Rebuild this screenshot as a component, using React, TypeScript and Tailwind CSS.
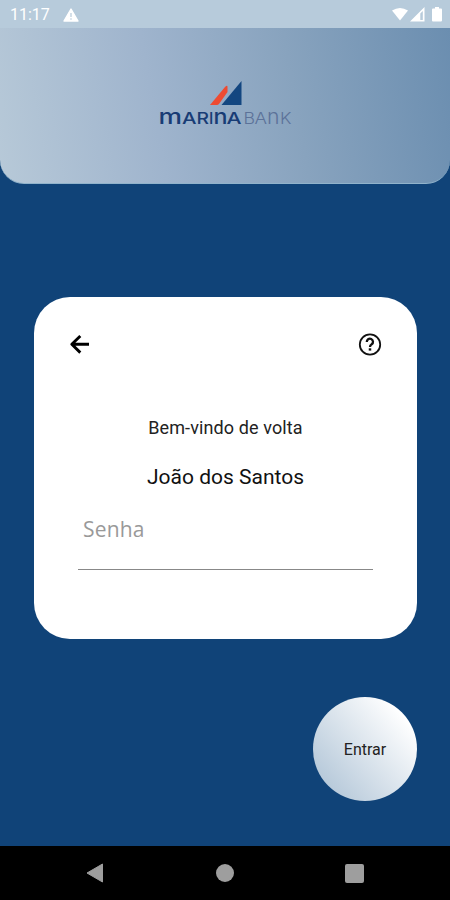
import { useState } from 'react'

const StatusBar = () => (
  <header className="flex h-7 items-center justify-between bg-[#b7cbdb] pl-2.5 pr-1.5 text-white">
    <div className="flex items-center gap-[13px] pt-0.5">
      <span className="w-10 text-[16px] leading-5">11:17</span>
      <svg viewBox="0 0 16 14" className="h-3.5 w-4" fill="none">
        <path d="M8 1 15 13H1Z" fill="white" stroke="white" strokeWidth="1.4" strokeLinejoin="round" />
        <path d="M8 5v4M8 10.2v1.6" stroke="#b7cbdb" strokeWidth="1.2" />
      </svg>
    </div>
    <svg viewBox="0 0 52 16" className="mt-0.5 h-4 w-[52px]" fill="white">
      <path d="M0 3.5Q8 -1.5 16 3.5L8 13.5Z" />
      <path fillRule="evenodd" d="M32.5 0V14.5H18ZM30.8 4 28.3 6.5V13H30.8Z" />
      <path d="M43 0h4v1.5h2a1 1 0 0 1 1 1V13.5a1 1 0 0 1-1 1h-8a1 1 0 0 1-1-1V2.5a1 1 0 0 1 1-1h2Z" />
    </svg>
  </header>
)

const Logo = () => (
  <svg viewBox="0 0 140 54" className="h-[54px] w-[140px]">
    <path d="M55 25 70 7Q72.5 4.5 72.5 7V12L64 24Q63 25 62 25Z" fill="#ee4b32" />
    <path d="M66.5 25 86.5 1V25Z" fill="#134680" />
    <g fontFamily="Inter, sans-serif" fontSize="16">
      <g fill="#183c75" fontWeight="500">
        <text x="3.5" y="44.3" fontSize="21" textLength="23.5" lengthAdjust="spacingAndGlyphs" className="lowercase">M</text>
        <text x="27" y="44.3" textLength="14.5" lengthAdjust="spacingAndGlyphs">A</text>
        <text x="41.5" y="44.3" textLength="12.5" lengthAdjust="spacingAndGlyphs">R</text>
        <text x="54" y="44.3">I</text>
        <text x="58.5" y="44.3" fontSize="21" textLength="14" lengthAdjust="spacingAndGlyphs" className="lowercase">N</text>
        <text x="71.5" y="44.3" textLength="15" lengthAdjust="spacingAndGlyphs">A</text>
      </g>
      <g fill="#5c7299" fontWeight="300">
        <text x="88.5" y="44.3" textLength="11.5" lengthAdjust="spacingAndGlyphs">B</text>
        <text x="99.5" y="44.3" textLength="12.5" lengthAdjust="spacingAndGlyphs">A</text>
        <text x="112" y="44.3" fontSize="21" textLength="12.5" lengthAdjust="spacingAndGlyphs" className="lowercase">N</text>
        <text x="125" y="44.3" textLength="11.5" lengthAdjust="spacingAndGlyphs">K</text>
      </g>
    </g>
  </svg>
)

const NavBar = () => (
  <nav className="flex h-[54px] items-center justify-between bg-black pl-[86px] pr-[86px]">
    <svg viewBox="0 0 18 20" className="h-5 w-[18px]">
      <path d="M1 10 16.5 1V19Z" fill="#9e9e9e" stroke="#9e9e9e" strokeLinejoin="round" />
    </svg>
    <div className="ml-px size-[18px] rounded-full bg-[#9e9e9e]" />
    <div className="size-[19px] rounded-[2px] bg-[#9e9e9e]" />
  </nav>
)

export default function App() {
  const [password, setPassword] = useState('')

  return (
    <div className="flex h-[900px] w-[450px] flex-col overflow-hidden bg-[#104378] font-[Roboto,sans-serif]">
      <StatusBar />
      <div className="flex h-[156px] justify-center rounded-b-[24px] border-b border-[#91b3cb] bg-[linear-gradient(80deg,#b7c9d8_0%,#9fb4cd_35%,#88a3be_65%,#6b8eb0_100%)] pt-[52px]">
        <Logo />
      </div>

      <main className="flex flex-1 flex-col pl-[34px] pr-[33px] pt-[113px]">
        <section className="h-[342px] rounded-[36px] bg-white px-[35px] pt-[35px]">
          <div className="flex h-6 items-center justify-between">
            <button type="button" aria-label="Voltar">
              <svg viewBox="0 0 20 20" className="size-5" fill="none" stroke="black" strokeWidth="2.9">
                <path d="M11.3 2 2.8 10.3 11.3 18.6M2.8 10.3H20" strokeLinejoin="round" />
              </svg>
            </button>
            <button type="button" aria-label="Ajuda">
              <svg viewBox="0 0 24 24" className="size-6" fill="none" stroke="#111111">
                <circle cx="12" cy="12.5" r="10.2" strokeWidth="1.8" />
                <path d="M8.8 10a3.1 3.1 0 1 1 4.9 2.3C12.5 13.2 12 13.5 12 15" strokeWidth="2.3" />
                <path d="M12 16.3v2.3" strokeWidth="2.5" />
              </svg>
            </button>
          </div>

          <p className="mt-[60px] text-center text-[18px] leading-6 tracking-[0.11px] text-[#222222]">Bem-vindo de volta</p>
          <p className="mt-[25px] text-center text-[21px] leading-6 text-[#111111]">João dos Santos</p>

          <input
            type="password"
            placeholder="Senha"
            value={password}
            onChange={(e) => setPassword(e.target.value)}
            className="ml-[9px] mt-3 h-[69px] w-[295px] border-b border-[#888888] pb-3 pl-[5px] font-['Open_Sans',sans-serif] text-[21px] tracking-[0.2px] outline-none placeholder:text-[#999999]"
          />
        </section>

        <button
          type="button"
          className="mt-[58px] size-[104px] self-end rounded-full bg-[linear-gradient(50deg,#a9bfd3_0%,#ffffff_85%)] pt-0.5 text-[16px] text-[#222222]"
        >
          Entrar
        </button>
      </main>

      <NavBar />
    </div>
  )
}
